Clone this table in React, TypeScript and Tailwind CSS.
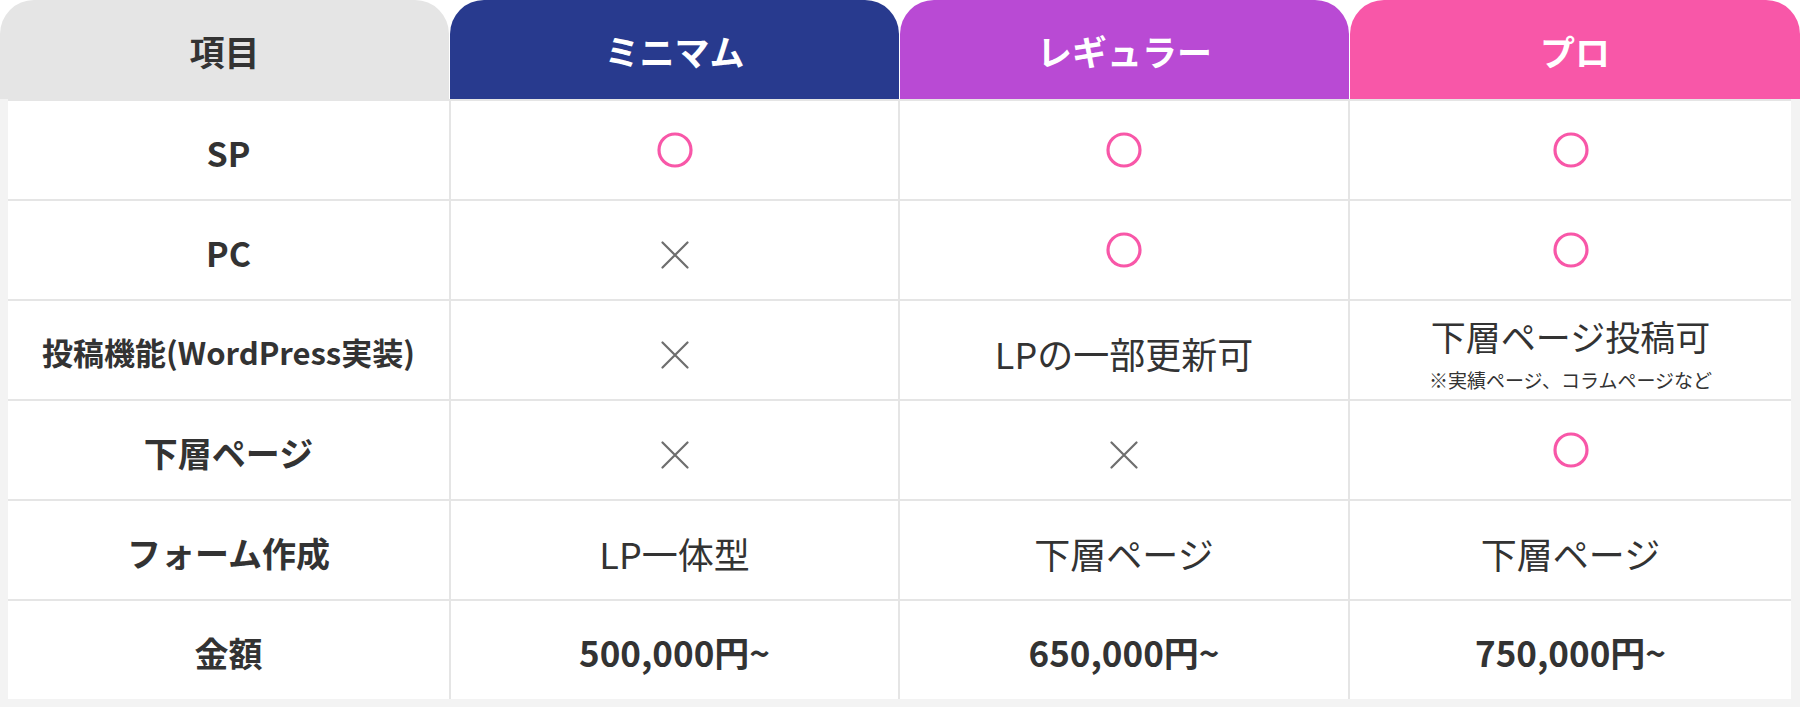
import type { ReactNode } from "react";

type Cell = ReactNode;

const font = { fontFamily: '"Noto Sans CJK JP", "Noto Sans", sans-serif' };

function Circle() {
    return (
        <svg width="36" height="36" viewBox="0 0 36 36" className="block">
            <circle cx="18" cy="18" r="16" fill="none" stroke="#f857a8" strokeWidth="3.2" />
        </svg>
    );
}

function Cross() {
    return (
        <svg width="28" height="28" viewBox="0 0 28 28" className="mt-[10px] block">
            <path d="M1.5 1.5 L26.5 26.5 M26.5 1.5 L1.5 26.5" stroke="#6e6e6e" strokeWidth="2.2" strokeLinecap="round" />
        </svg>
    );
}

const headers = [
    { label: "項目", cls: "bg-[#e5e5e5] text-[#333333]" },
    { label: "ミニマム", cls: "bg-[#283a8e] text-white" },
    { label: "レギュラー", cls: "bg-[#b94ad4] text-white" },
    { label: "プロ", cls: "bg-[#f857a8] text-white" },
];

const rows: { label: string; cells: Cell[]; bold?: boolean }[] = [
    { label: "SP", cells: [<Circle />, <Circle />, <Circle />] },
    { label: "PC", cells: [<Cross />, <Circle />, <Circle />] },
    {
        label: "投稿機能(WordPress実装)",
        cells: [
            <Cross />,
            "LPの一部更新可",
            <div className="flex flex-col items-center pt-[8px]">
                <span className="text-[35px] leading-[40px]">下層ページ投稿可</span>
                <span className="mt-[12px] text-[19px] leading-[24px]">※実績ページ、コラムページなど</span>
            </div>,
        ],
    },
    { label: "下層ページ", cells: [<Cross />, <Cross />, <Circle />] },
    { label: "フォーム作成", cells: ["LP一体型", "下層ページ", "下層ページ"] },
    { label: "金額", cells: ["500,000円~", "650,000円~", "750,000円~"], bold: true },
];

export default function App() {
    return (
        <div className="w-[1800px] h-[708px] bg-white text-[#333333]" style={font}>
            {/* Header */}
            <div className="grid grid-cols-[449px_449px_449px_1fr] gap-x-px h-[99px]">
                {headers.map((h) => (
                    <div
                        key={h.label}
                        className={`${h.cls} rounded-t-[34px] flex items-center justify-center pt-[4px] text-[35px] font-bold`}
                    >
                        {h.label}
                    </div>
                ))}
            </div>

            {/* Body */}
            <div className="bg-[#f3f3f3] pl-2 pr-[9px] pb-2">
                <div className="grid grid-cols-[441px_447px_448px_1fr] auto-rows-[98px] gap-[2px] pt-[2px] bg-[#e5e5e5]">
                    {rows.map((r) => (
                        <>
                            <div
                                key={r.label}
                                className={`bg-white flex items-center justify-center pt-[5px] font-bold ${
                                    r.label.length > 10 ? "text-[31px]" : "text-[34px]"
                                }`}
                            >
                                {r.label}
                            </div>
                            {r.cells.map((c, i) => (
                                <div
                                    key={r.label + i}
                                    className={`bg-white flex items-center justify-center ${
                                        typeof c === "string" ? "pt-[5px]" : ""
                                    } ${r.bold ? "font-bold text-[35px]" : "font-normal text-[36px]"}`}
                                >
                                    {c}
                                </div>
                            ))}
                        </>
                    ))}
                </div>
            </div>
        </div>
    );
}
